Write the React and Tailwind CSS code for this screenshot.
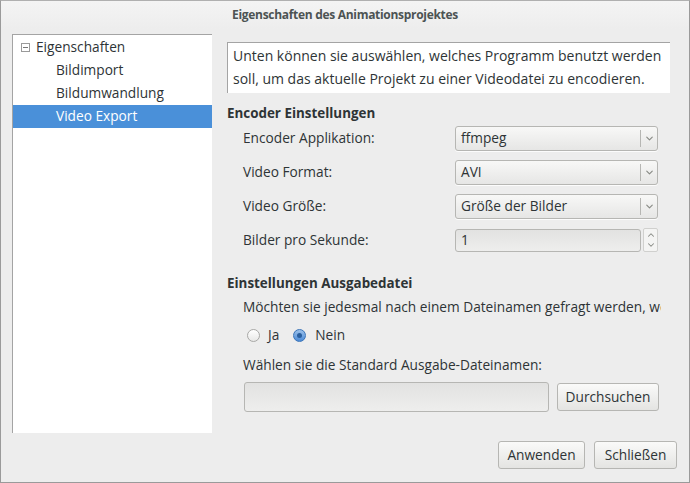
import { ChevronDown, ChevronUp } from 'lucide-react'

const treeItems = [
  { label: 'Bildimport' },
  { label: 'Bildumwandlung' },
  { label: 'Video Export', selected: true },
]

const encoderRows = [
  { label: 'Encoder Applikation:', value: 'ffmpeg' },
  { label: 'Video Format:', value: 'AVI' },
  { label: 'Video Größe:', value: 'Größe der Bilder' },
]

function Combo({ value }) {
  return (
    <div className="flex items-center w-[203px] h-[25px] rounded-[3px] border border-[#b6b6b3] bg-gradient-to-b from-[#f8f8f7] to-[#e6e6e5] shadow-[0_1px_0_rgba(255,255,255,0.8)]">
      <span className="flex-1 pl-[5px] text-[#2e3436]">{value}</span>
      <div className="w-px h-[17px] bg-[#b6b6b3]" />
      <div className="w-[16px] flex justify-center">
        <ChevronDown size={11} strokeWidth={2.5} className="text-[#888a85]" />
      </div>
    </div>
  )
}

function Button({ children, className = '' }) {
  return (
    <div className={`flex items-center justify-center h-[28px] rounded-[3px] border border-[#b6b6b3] bg-gradient-to-b from-[#fafaf9] to-[#e4e4e2] text-[#2e3436] ${className}`}>
      {children}
    </div>
  )
}

export default function App() {
  return (
    <div className="w-[690px] h-[483px] bg-[#ededed] border border-[#9a9a9a] border-t-[#b0b0b0] flex flex-col text-[13.7px] text-[#2e3436] font-['Open_Sans',sans-serif] overflow-hidden">
      {/* Title bar */}
      <div className="h-[28px] flex items-center justify-center bg-gradient-to-b from-[#f4f4f4] to-[#ededed]">
        <span className="text-[12px] font-bold text-[#4c5353] tracking-[-0.3px]">Eigenschaften des Animationsprojektes</span>
      </div>

      <div className="flex flex-1 pt-[5px] pl-[11px]">
        {/* Tree */}
        <div className="w-[200px] h-[399px] bg-white border-l border-t border-[#a4a4a4] pt-[1px]">
          <div className="h-[23px] flex items-center">
            <div className="ml-[8px] w-[9px] h-[9px] border border-[#9a9a9a] flex items-center justify-center">
              <div className="w-[5px] h-px bg-[#777]" />
            </div>
            <span className="ml-[6px]">Eigenschaften</span>
          </div>
          {treeItems.map(({ label, selected }) => (
            <div
              key={label}
              className={`h-[23px] flex items-center pl-[43px] ${selected ? 'bg-[#4a90d9] text-white' : ''}`}
            >
              {label}
            </div>
          ))}
        </div>

        {/* Content */}
        <div className="w-[450px] ml-[15px] pt-[8px] flex flex-col">
          <div className="w-[443px] h-[51px] bg-white border-l border-t border-[#a4a4a4] px-[5px] pt-[1px] leading-[23px] text-[14px]">
            Unten können sie auswählen, welches Programm benutzt werden soll, um das aktuelle Projekt zu einer Videodatei zu encodieren.
          </div>

          <div className="mt-[10px] font-bold text-[13.4px] text-[#2e3436]">Encoder Einstellungen</div>

          <div className="mt-[3px] flex flex-col gap-[9px] pl-[16px]">
            {encoderRows.map(({ label, value }) => (
              <div key={label} className="flex items-center">
                <span className="w-[212px]">{label}</span>
                <Combo value={value} />
              </div>
            ))}
            <div className="flex items-center">
              <span className="w-[212px]">Bilder pro Sekunde:</span>
              <div className="w-[186px] h-[23px] rounded-[3px] border border-[#b6b6b3] bg-gradient-to-b from-[#e2e2e1] to-[#eeeeed] pl-[5px] flex items-center">1</div>
              <div className="ml-[2px] w-[15px] h-[24px] border border-[#d0d0ce] rounded-[2px] bg-[#f4f4f3] flex flex-col items-center justify-center text-[#888a85]">
                <ChevronUp size={10} strokeWidth={2.5} />
                <ChevronDown size={10} strokeWidth={2.5} />
              </div>
            </div>
          </div>

          <div className="mt-[21px] font-bold text-[13.4px]">Einstellungen Ausgabedatei</div>
          <div className="mt-[4px] pl-[16px] whitespace-nowrap overflow-hidden w-[434px]">
            Möchten sie jedesmal nach einem Dateinamen gefragt werden, wenn
          </div>

          <div className="mt-[7px] pl-[20px] flex items-center">
            <div className="w-[13px] h-[13px] rounded-full border border-[#a8a8a6] bg-gradient-to-b from-white to-[#e8e8e7]" />
            <span className="ml-[8px]">Ja</span>
            <div className="ml-[14px] w-[13px] h-[13px] rounded-full border border-[#3a74b8] bg-gradient-to-b from-[#9cc1ea] to-[#4a8ad6] flex items-center justify-center">
              <div className="w-[5px] h-[5px] rounded-full bg-[#2a5f9e]" />
            </div>
            <span className="ml-[9px]">Nein</span>
          </div>

          <div className="mt-[10px] pl-[16px]">Wählen sie die Standard Ausgabe-Dateinamen:</div>

          <div className="mt-[6px] pl-[17px] flex items-center">
            <div className="w-[305px] h-[30px] rounded-[3px] border border-[#b6b6b3] bg-gradient-to-b from-[#e2e2e1] to-[#eeeeed]" />
            <Button className="ml-[8px] w-[102px]">Durchsuchen</Button>
          </div>

          <div className="mt-[29px] flex justify-end gap-[9px]">
            <Button className="w-[87px]">Anwenden</Button>
            <Button className="w-[83px]">Schließen</Button>
          </div>
        </div>
      </div>
    </div>
  )
}
